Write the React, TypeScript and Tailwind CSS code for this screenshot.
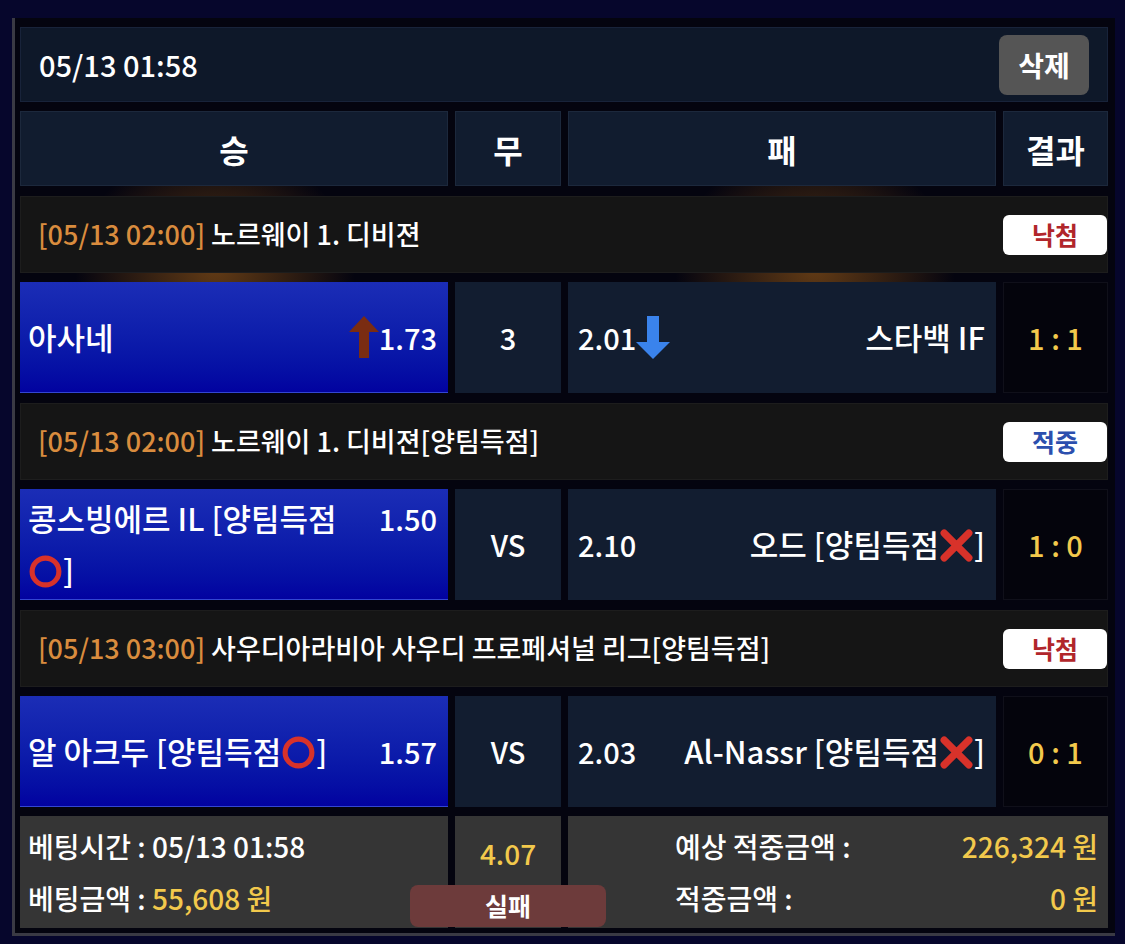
import React from 'react';

const font = { fontFamily: '"Noto Sans CJK KR", "Noto Sans", sans-serif' };

const UpArrow = () => (
  <svg width="30" height="42" viewBox="0 0 30 42" className="shrink-0">
    <polygon points="15,0 30,16 20,16 20,42 10,42 10,16 0,16" fill="#7a2c12" />
  </svg>
);

const DownArrow = () => (
  <svg width="34" height="43" viewBox="0 0 34 43" className="shrink-0">
    <polygon points="11,0 23,0 23,26 34,26 17,43 0,26 11,26" fill="#3a83ec" />
  </svg>
);

const Ring = () => (
  <svg width="35" height="35" viewBox="0 0 34 34" className="inline-block align-[-6px]">
    <circle cx="17" cy="17" r="13" fill="none" stroke="#d8322a" strokeWidth="5" />
  </svg>
);

const Cross = () => (
  <svg width="35" height="35" viewBox="0 0 34 34" className="inline-block align-[-6px]">
    <path d="M5 5 L29 29 M29 5 L5 29" stroke="#d8322a" strokeWidth="7" strokeLinecap="round" />
  </svg>
);

type Game = {
  time: string;
  league: string;
  status: '낙첨' | '적중';
  home: React.ReactNode;
  homeOdds: string;
  homeArrow?: boolean;
  draw: string;
  away: React.ReactNode;
  awayOdds: string;
  awayArrow?: boolean;
  score: string;
};

const games: Game[] = [
  {
    time: '[05/13 02:00]',
    league: '노르웨이 1. 디비젼',
    status: '낙첨',
    home: '아사네',
    homeOdds: '1.73',
    homeArrow: true,
    draw: '3',
    away: '스타백 IF',
    awayOdds: '2.01',
    awayArrow: true,
    score: '1 : 1',
  },
  {
    time: '[05/13 02:00]',
    league: '노르웨이 1. 디비젼[양팀득점]',
    status: '적중',
    home: (
      <>
        콩스빙에르 IL [양팀득점<wbr />
        <span className="whitespace-nowrap">
          <Ring />]
        </span>
      </>
    ),
    homeOdds: '1.50',
    draw: 'VS',
    away: (
      <>
        오드 [양팀득점<Cross />]
      </>
    ),
    awayOdds: '2.10',
    score: '1 : 0',
  },
  {
    time: '[05/13 03:00]',
    league: '사우디아라비아 사우디 프로페셔널 리그[양팀득점]',
    status: '낙첨',
    home: (
      <>
        알 아크두 [양팀득점<Ring />]
      </>
    ),
    homeOdds: '1.57',
    draw: 'VS',
    away: (
      <>
        Al-Nassr [양팀득점<Cross />]
      </>
    ),
    awayOdds: '2.03',
    score: '0 : 1',
  },
];

const cols = 'grid grid-cols-[428px_106px_428px_105px] gap-x-[7px]';

const App = () => {
  return (
    <div
      className="min-h-screen w-full bg-[#06062c] pt-[18px] pl-[12px] pb-[7px]"
      style={font}
    >
      <div className="w-[1103px] border-l-[3px] border-b-[3px] border-[#3a3a44] bg-[#04040f] bg-[radial-gradient(ellipse_140px_120px_at_200px_250px,rgba(160,95,25,0.6),transparent),radial-gradient(ellipse_140px_120px_at_800px_250px,rgba(160,95,25,0.6),transparent)] pt-[9px] pb-[5px] pl-[5px] pr-[7px] flex flex-col gap-[9px] text-white">
        {/* 상단 날짜 + 삭제 */}
        <div className="h-[75px] bg-[#0e1829] border border-[#18233a] flex items-center justify-between pl-[18px] pr-[18px]">
          <span className="text-[29px] font-medium">05/13 01:58</span>
          <button className="w-[90px] h-[60px] rounded-lg bg-[#555555] text-[28px] font-bold text-white">
            삭제
          </button>
        </div>

        {/* 컬럼 헤더 */}
        <div className={`${cols} h-[75px]`}>
          {['승', '무', '패', '결과'].map((label) => (
            <div
              key={label}
              className="bg-[#111c2f] border border-[#1c283c] flex items-center justify-center text-[32px] font-bold"
            >
              {label}
            </div>
          ))}
        </div>

        {games.map((g, i) => (
          <React.Fragment key={i}>
            <div className="h-[77px] bg-[#151515] border border-[#1d1d1d] flex items-center justify-between pl-[17px] mt-[1px]">
              <div className="text-[27px] font-medium">
                <span className="text-[#d98c3e]">{g.time}</span> {g.league}
              </div>
              <div
                className={`w-[104px] h-[40px] rounded-md bg-white flex items-center justify-center text-[25px] font-bold ${
                  g.status === '낙첨' ? 'text-[#b1262b]' : 'text-[#2c4fae]'
                }`}
              >
                {g.status}
              </div>
            </div>

            <div className={`${cols} h-[111px] text-[29px] font-medium`}>
              <div className="bg-gradient-to-b from-[#1b2db6] to-[#0202a0] border-b border-[#3346d2] flex items-center pl-[8px] pr-[11px]">
                <div className="flex items-start justify-between w-full leading-[52px]">
                  <div className="text-[31px]">{g.home}</div>
                  <div className="w-[92px] shrink-0 flex items-center justify-end">
                    {g.homeArrow && <UpArrow />}
                    <span>{g.homeOdds}</span>
                  </div>
                </div>
              </div>
              <div className="bg-[#121d30] flex items-center justify-center">{g.draw}</div>
              <div className="bg-[#121d30] flex items-center justify-between pl-[10px] pr-[11px]">
                <div className="flex items-center">
                  <span>{g.awayOdds}</span>
                  {g.awayArrow && <DownArrow />}
                </div>
                <div className="text-right text-[31px]">{g.away}</div>
              </div>
              <div className="bg-[#04040c] border border-[#10101a] flex items-center justify-center text-[#f2c94c]">
                {g.score}
              </div>
            </div>
          </React.Fragment>
        ))}

        {/* 합계 */}
        <div className={`${cols} h-[112px] text-[28px] font-medium`}>
          <div className="bg-[#353535] flex flex-col justify-center pl-[8px] leading-[52px]">
            <div>베팅시간 : 05/13 01:58</div>
            <div>
              베팅금액 : <span className="text-[#f2c94c]">55,608 원</span>
            </div>
          </div>
          <div className="relative bg-[#353535] flex justify-center pt-[16px] text-[#f2c94c]">
            <span>4.07</span>
            <div className="absolute bottom-[1px] left-1/2 -translate-x-1/2 w-[196px] h-[42px] rounded-lg bg-[#6d3b3b] flex items-center justify-center text-white text-[25px] font-bold">
              실패
            </div>
          </div>
          <div className="col-span-2 bg-[#353535] flex flex-col justify-center pl-[107px] pr-[10px] leading-[52px]">
            <div className="flex justify-between">
              <span>예상 적중금액 :</span>
              <span className="text-[#f2c94c]">226,324 원</span>
            </div>
            <div className="flex justify-between">
              <span>적중금액 :</span>
              <span className="text-[#f2c94c]">0 원</span>
            </div>
          </div>
        </div>
      </div>
    </div>
  );
};

export default App;
